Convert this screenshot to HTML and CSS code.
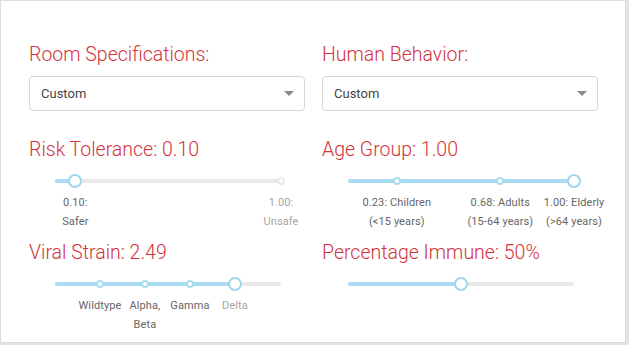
FILE: index.html
```html
<!DOCTYPE html>
<html lang="en">
<head>
    <meta charset="UTF-8">
    <meta name="viewport" content="width=device-width, initial-scale=1.0">
    <title>Simulation Settings</title>
    <link rel="stylesheet" href="styles.css">
</head>
<body>
    <div class="card">
        <div class="grid">
            <div class="field">
                <div class="title">Room Specifications:</div>
                <div class="select">
                    <span>Custom</span>
                    <span class="arrow"></span>
                </div>
            </div>
            <div class="field">
                <div class="title">Human Behavior:</div>
                <div class="select">
                    <span>Custom</span>
                    <span class="arrow"></span>
                </div>
            </div>

            <div class="field">
                <div class="title">Risk Tolerance: 0.10</div>
                <div class="slider">
                    <div class="rail"></div>
                    <div class="track" style="width: 9%"></div>
                    <span class="dot active" style="left: 9%"></span>
                    <span class="dot" style="left: 100%"></span>
                    <span class="handle" style="left: 9%"></span>
                </div>
                <div class="marks">
                    <span class="mark" style="left: 9%">0.10:<br>Safer</span>
                    <span class="mark off" style="left: 100%">1.00:<br>Unsafe</span>
                </div>
            </div>
            <div class="field">
                <div class="title">Age Group: 1.00</div>
                <div class="slider">
                    <div class="rail"></div>
                    <div class="track" style="width: 100%"></div>
                    <span class="dot active" style="left: 21.6%"></span>
                    <span class="dot active" style="left: 67.4%"></span>
                    <span class="handle" style="left: 100%"></span>
                </div>
                <div class="marks">
                    <span class="mark" style="left: 21.6%">0.23: Children<br>(&lt;15 years)</span>
                    <span class="mark" style="left: 67.4%">0.68: Adults<br>(15-64 years)</span>
                    <span class="mark" style="left: 100%">1.00: Elderly<br>(&gt;64 years)</span>
                </div>
            </div>

            <div class="field">
                <div class="title">Viral Strain: 2.49</div>
                <div class="slider">
                    <div class="rail"></div>
                    <div class="track" style="width: 79.6%"></div>
                    <span class="dot active" style="left: 19.9%"></span>
                    <span class="dot active" style="left: 39.8%"></span>
                    <span class="dot active" style="left: 59.7%"></span>
                    <span class="handle" style="left: 79.6%"></span>
                </div>
                <div class="marks">
                    <span class="mark" style="left: 19.9%">Wildtype</span>
                    <span class="mark" style="left: 39.8%">Alpha,<br>Beta</span>
                    <span class="mark" style="left: 59.7%">Gamma</span>
                    <span class="mark off" style="left: 79.6%">Delta</span>
                </div>
            </div>
            <div class="field">
                <div class="title">Percentage Immune: 50%</div>
                <div class="slider">
                    <div class="rail"></div>
                    <div class="track" style="width: 50%"></div>
                    <span class="handle" style="left: 50%"></span>
                </div>
            </div>
        </div>
    </div>
</body>
</html>
```

FILE: styles.css
```css
* {
    margin: 0;
    padding: 0;
    box-sizing: border-box;
}

body {
    background-color: #e4e4e4;
    font-family: "Roboto", "Liberation Sans", sans-serif;
    height: 345px;
    overflow: hidden;
}

.card {
    width: 626px;
    height: 343px;
    background-color: #fff;
    border: 1px solid #dcdcdc;
    padding: 42px 27px 0 28px;
}

.grid {
    display: grid;
    grid-template-columns: 276px 276px;
    column-gap: 17px;
}

.field {
    display: flex;
    flex-direction: column;
}

.title {
    color: #d2333d;
    font-size: 19.5px;
    font-weight: 300;
    line-height: 24px;
}

.select {
    margin-top: 9px;
    height: 35px;
    border: 1px solid #d6d6d6;
    border-radius: 4px;
    display: flex;
    align-items: center;
    justify-content: space-between;
    padding: 0 10px 0 11px;
    font-size: 13px;
    color: #444;
    margin-bottom: 27px;
}

.arrow {
    width: 0;
    height: 0;
    border-left: 5px solid transparent;
    border-right: 5px solid transparent;
    border-top: 5px solid #8a8a8a;
}

.slider {
    position: relative;
    height: 14px;
    margin: 12px 24px 0 26px;
}

.rail,
.track {
    position: absolute;
    left: 0;
    top: 5px;
    height: 4px;
    border-radius: 2px;
}

.rail {
    width: 100%;
    background-color: #e9e9e9;
}

.track {
    background-color: #a9dcf3;
}

.dot {
    position: absolute;
    top: 3px;
    width: 8px;
    height: 8px;
    margin-left: -4px;
    border-radius: 50%;
    background-color: #fff;
    border: 2px solid #e9e9e9;
}

.dot.active {
    border-color: #a9dcf3;
}

.handle {
    position: absolute;
    top: 0;
    width: 14px;
    height: 14px;
    margin-left: -7px;
    border-radius: 50%;
    background-color: #fff;
    border: 2px solid #9ed6f0;
}

.marks {
    position: relative;
    height: 38px;
    margin: 5px 24px 10px 26px;
    font-size: 11px;
    line-height: 19px;
    letter-spacing: 0.1px;
    color: #666;
}

.mark {
    position: absolute;
    top: 0;
    transform: translateX(-50%);
    text-align: center;
    white-space: nowrap;
}

.mark.off {
    color: #a6a6a6;
}
```
